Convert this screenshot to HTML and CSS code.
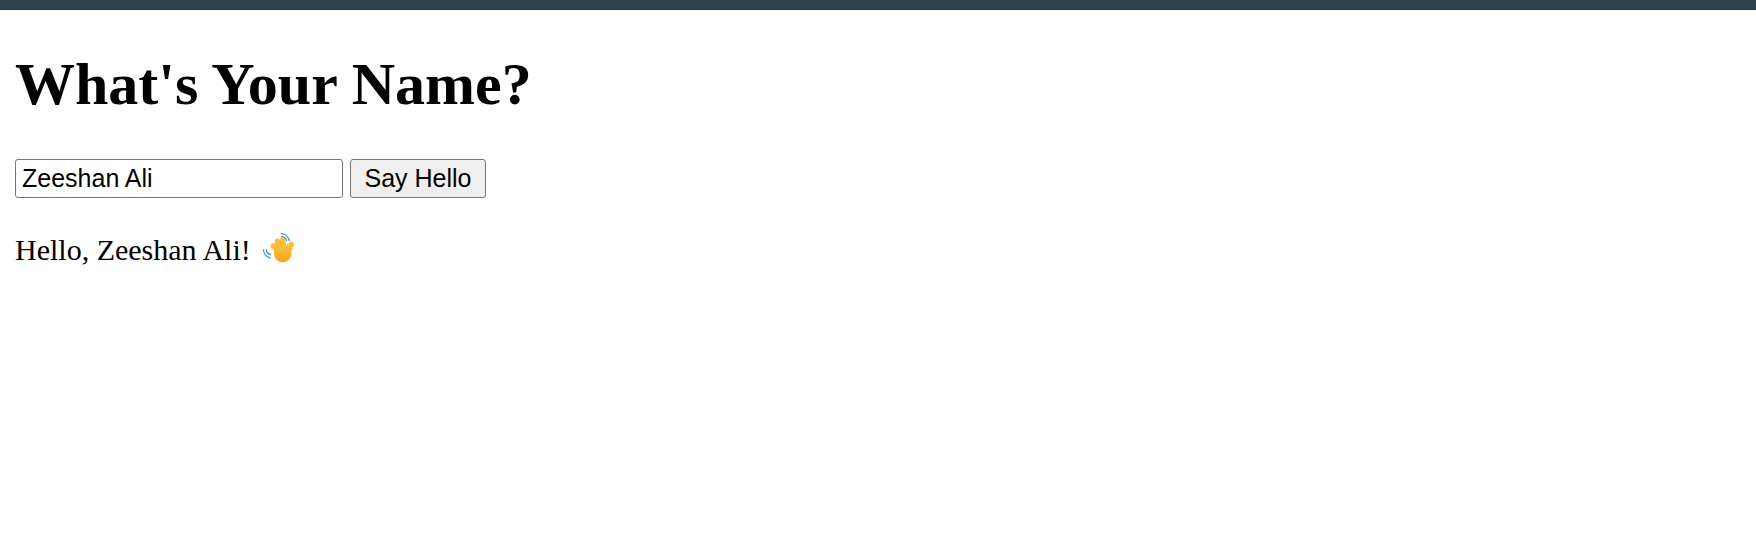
FILE: index.html
```html
<!DOCTYPE html>
<html lang="en">
<head>
<meta charset="utf-8">
<title>What's Your Name?</title>
<link rel="stylesheet" href="styles.css">
</head>
<body>
<div class="topbar"></div>
<main class="app">
  <h1 class="title">What's Your Name?</h1>
  <div class="form">
    <input class="name-input" type="text" value="Zeeshan Ali">
    <button class="say-btn" type="button">Say Hello</button>
  </div>
  <p class="greeting">Hello, Zeeshan Ali! <svg class="wave" viewBox="0 0 34 34" aria-hidden="true">
    <defs><linearGradient id="skin" x1="0" y1="0" x2="0" y2="1"><stop offset="0" stop-color="#fdc53f"/><stop offset="1" stop-color="#f8a020"/></linearGradient></defs>
    <g fill="none" stroke="#3b96d8" stroke-width="1.2" stroke-linecap="round">
      <path d="M19 3.500c3.600 0 6.800 2.600 7.600 6.600"/>
      <path d="M19.500 6.200c2.300.1 3.900 1.500 4.600 3.700"/>
      <path d="M2.300 18.500c.2 3.600 2.800 6.900 6.500 8"/>
      <path d="M5 18.800c.2 2 1.500 3.700 3.700 4.500"/>
    </g>
    <g fill="none" stroke="#fcbc38" stroke-width="5" stroke-linecap="round">
      <path d="M19 22 11.500 15"/>
      <path d="M20 21 15.500 10.500"/>
      <path d="M22 20 20.500 9.500"/>
      <path d="M25 24 28.500 13.500"/>
    </g>
    <ellipse cx="20.500" cy="22" rx="8.300" ry="8.500" fill="url(#skin)"/>
    <g fill="none" stroke="#ed9d22" stroke-width=".7" stroke-linecap="round">
      <path d="M13.500 12.500 17 17"/>
      <path d="M18 10.500 20 16"/>
      <path d="M25 13.500 24.500 18"/>
    </g>
  </svg></p>
</main>
</body>
</html>
```
FILE: styles.css
```css
html, body { margin: 0; padding: 0; background: #fff; }
body { font-family: "Liberation Serif", serif; color: #000; }
.topbar { height: 10px; background: #2c434e; }
.app { padding: 0 15px; }
.title { margin: 40px 0 40px; font-size: 60px; line-height: 69px; font-weight: 700; }
.form { display: flex; gap: 7px; align-items: stretch; height: 39px; }
.name-input {
  box-sizing: border-box; width: 328px; height: 39px; margin: 0; padding: 1px 6px;
  font: 25px "Liberation Sans", sans-serif; color: #000; background: #fff;
  border: 1px solid #767676; border-radius: 3px;
}
.say-btn {
  box-sizing: border-box; width: 136px; height: 39px; margin: 0; padding: 1px 7px;
  font: 25px "Liberation Sans", sans-serif; color: #000; background: #efefef;
  border: 1px solid #767676; border-radius: 3px;
}
.greeting { margin: 34px 0 0; font-size: 30px; line-height: 35px; display: flex; align-items: center; gap: 10px; }
.wave { width: 36px; height: 36px; flex: none; margin-top: -3px; }
```
